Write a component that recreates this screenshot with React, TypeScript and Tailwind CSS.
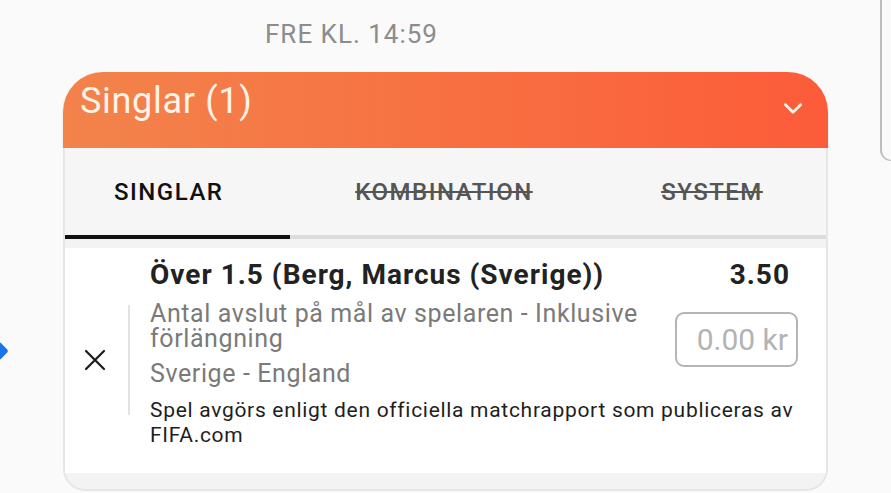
export default function App() {
  return (
    <div className="relative h-[493px] w-[891px] overflow-hidden bg-[#fafafa] font-['Roboto',sans-serif]">
      {/* edge of the neighbouring panel, top right */}
      <div className="absolute right-0 top-0 h-[161px] w-[11px] rounded-bl-[14px] border-b border-l-2 border-[#bdbdbd]" />
      {/* blue marker cut by the left edge */}
      <div className="absolute left-[-8px] top-[344px] h-[14px] w-[14px] rotate-45 rounded-[3px] bg-[#1a73e8]" />

      <div className="pl-[265px] pt-[19px] text-[26px] leading-[30px] tracking-[1px] text-[#8c8c8c]">
        FRE KL. 14:59
      </div>

      <div className="ml-[63px] mt-[23px] w-[765px]">
        <div className="flex h-[76px] items-start justify-between rounded-t-[40px] bg-gradient-to-r from-[#f2834b] to-[#fc5b39] pl-[17px] pr-[22px] pt-[8px] shadow-[0_1px_2px_rgba(0,0,0,0.15)]">
          <span className="text-[36px] leading-[42px] tracking-[0.7px] text-[#fff3ea]">Singlar (1)</span>
          <svg className="mt-[15px]" width="26" height="26" viewBox="0 0 24 24" fill="none" stroke="#fff3ea" strokeWidth="2.6" strokeLinecap="round" strokeLinejoin="round">
            <path d="M5 9l7 7 7-7" />
          </svg>
        </div>

        <div className="rounded-b-[22px] border-x-2 border-b-2 border-[#e6e6e6] bg-[#f3f3f3] pb-[16px]">
          <div className="flex h-[91px] bg-[#f6f6f6] text-[24px] font-medium tracking-[1.5px]">
            <div className="flex w-[225px] flex-col">
              <div className="flex flex-1 items-center pl-[49px] text-[#111]">SINGLAR</div>
              <div className="h-[4px] bg-[#111]" />
            </div>
            <div className="flex w-[308px] flex-col">
              <div className="flex flex-1 items-center justify-center text-[#555] line-through">KOMBINATION</div>
              <div className="h-[4px] bg-[#dcdcdc]" />
            </div>
            <div className="flex flex-1 flex-col">
              <div className="flex flex-1 items-center justify-center text-[#555] line-through">SYSTEM</div>
              <div className="h-[4px] bg-[#dcdcdc]" />
            </div>
          </div>

          <div className="mt-[9px] flex bg-white pb-[25px] pt-[11px]">
            <div className="flex w-[60px] items-center justify-center pt-[12px]">
              <svg width="22" height="22" viewBox="0 0 22 22" stroke="#1a1a1a" strokeWidth="2.2" strokeLinecap="round">
                <path d="M2 2l18 18M20 2L2 20" />
              </svg>
            </div>
            <div className="ml-[3px] mt-[46px] h-[110px] w-[2px] self-start bg-[#e2e2e2]" />
            <div className="flex-1 pl-[20px] pr-[28px]">
              <div className="flex items-baseline justify-between text-[28px] font-bold leading-[32px] tracking-[1px] text-[#222]">
                <span>Över 1.5 (Berg, Marcus (Sverige))</span>
                <span className="mr-[8px]">3.50</span>
              </div>
              <div className="flex items-start justify-between">
                <div className="w-[510px] text-[25px] leading-[25px] tracking-[0.6px] text-[#7a7a7a]">
                  <div className="pt-[10px]">Antal avslut på mål av spelaren - Inklusive förlängning</div>
                  <div className="mt-[10px]">Sverige - England</div>
                </div>
                <div className="mt-[21px] flex h-[55px] w-[123px] items-center justify-end rounded-[9px] border-2 border-[#b5b5b5] pr-[8px] text-[30px] text-[#b3b3b3]">
                  0.00 kr
                </div>
              </div>
              <div className="mt-[12px] text-[21px] leading-[25px] tracking-[0.7px] text-[#1e1e1e]">
                Spel avgörs enligt den officiella matchrapport som publiceras av FIFA.com
              </div>
            </div>
          </div>
        </div>
      </div>
    </div>
  );
}
